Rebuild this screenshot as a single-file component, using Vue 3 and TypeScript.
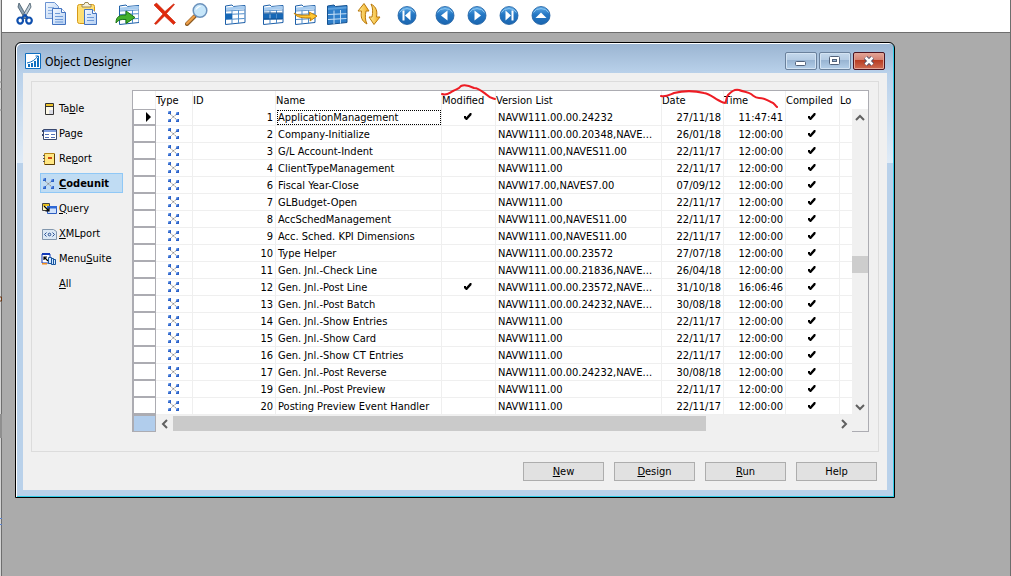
<script setup lang="ts">
import { ref } from 'vue'

interface Row {
  id: number
  name: string
  modified: boolean
  version: string
  date: string
  time: string
}

const toolGroups: { icon: string; label: string }[][] = [
  [
    { icon: 'cut', label: 'Cut' },
    { icon: 'copy', label: 'Copy' },
    { icon: 'paste', label: 'Paste' },
  ],
  [{ icon: 'insert', label: 'Insert' }],
  [
    { icon: 'delete', label: 'Delete' },
    { icon: 'find', label: 'Find' },
  ],
  [{ icon: 'field', label: 'Field filter' }],
  [
    { icon: 'table', label: 'Table filter' },
    { icon: 'flow', label: 'Flow filter' },
    { icon: 'all', label: 'Show all' },
    { icon: 'sort', label: 'Sort' },
  ],
  [{ icon: 'first', label: 'First' }],
  [
    { icon: 'prev', label: 'Previous' },
    { icon: 'next', label: 'Next' },
    { icon: 'last', label: 'Last' },
    { icon: 'up', label: 'List' },
  ],
]

const types = [
  { icon: 't-table', pre: 'Ta', key: 'b', post: 'le' },
  { icon: 't-page', pre: 'Pa', key: 'g', post: 'e' },
  { icon: 't-report', pre: 'Re', key: 'p', post: 'ort' },
  { icon: 't-code', pre: '', key: 'C', post: 'odeunit' },
  { icon: 't-query', pre: '', key: 'Q', post: 'uery' },
  { icon: 't-xml', pre: '', key: 'X', post: 'MLport' },
  { icon: 't-menu', pre: 'Menu', key: 'S', post: 'uite' },
  { icon: '', pre: '', key: 'A', post: 'll' },
]
const selected = ref('t-code')

const r = (id: number, name: string, version: string, date: string, time = '12:00:00', modified = false): Row => ({
  id, name, modified, version, date, time,
})

const rows: Row[] = [
  r(1, 'ApplicationManagement', 'NAVW111.00.00.24232', '27/11/18', '11:47:41', true),
  r(2, 'Company-Initialize', 'NAVW111.00.00.20348,NAVE...', '26/01/18'),
  r(3, 'G/L Account-Indent', 'NAVW111.00,NAVES11.00', '22/11/17'),
  r(4, 'ClientTypeManagement', 'NAVW111.00', '22/11/17'),
  r(6, 'Fiscal Year-Close', 'NAVW17.00,NAVES7.00', '07/09/12'),
  r(7, 'GLBudget-Open', 'NAVW111.00', '22/11/17'),
  r(8, 'AccSchedManagement', 'NAVW111.00,NAVES11.00', '22/11/17'),
  r(9, 'Acc. Sched. KPI Dimensions', 'NAVW111.00,NAVES11.00', '22/11/17'),
  r(10, 'Type Helper', 'NAVW111.00.00.23572', '27/07/18'),
  r(11, 'Gen. Jnl.-Check Line', 'NAVW111.00.00.21836,NAVE...', '26/04/18'),
  r(12, 'Gen. Jnl.-Post Line', 'NAVW111.00.00.23572,NAVE...', '31/10/18', '16:06:46', true),
  r(13, 'Gen. Jnl.-Post Batch', 'NAVW111.00.00.24232,NAVE...', '30/08/18'),
  r(14, 'Gen. Jnl.-Show Entries', 'NAVW111.00', '22/11/17'),
  r(15, 'Gen. Jnl.-Show Card', 'NAVW111.00', '22/11/17'),
  r(16, 'Gen. Jnl.-Show CT Entries', 'NAVW111.00', '22/11/17'),
  r(17, 'Gen. Jnl.-Post Reverse', 'NAVW111.00.00.24232,NAVE...', '30/08/18'),
  r(19, 'Gen. Jnl.-Post Preview', 'NAVW111.00', '22/11/17'),
  r(20, 'Posting Preview Event Handler', 'NAVW111.00', '22/11/17'),
]

const actions = [
  { key: 'N', rest: 'ew' },
  { key: 'D', rest: 'esign' },
  { key: 'R', rest: 'un' },
  { key: '', rest: 'Help' },
]
</script>

<template>
  <svg class="defs" aria-hidden="true">
    <defs>
      <linearGradient id="ball" x1="0" y1="0" x2="0" y2="1">
        <stop offset="0" stop-color="#62aee8" />
        <stop offset=".45" stop-color="#2477c4" />
        <stop offset="1" stop-color="#1b66b0" />
      </linearGradient>
      <linearGradient id="gold" x1="0" y1="0" x2="1" y2="0">
        <stop offset="0" stop-color="#fff0a0" />
        <stop offset="1" stop-color="#f0a818" />
      </linearGradient>
      <linearGradient id="paper" x1="0" y1="0" x2="1" y2="1">
        <stop offset="0" stop-color="#f4f9ff" />
        <stop offset="1" stop-color="#b4cff2" />
      </linearGradient>
    </defs>

    <symbol id="cut" viewBox="0 0 24 24">
      <path d="M6 1 5 5l7 12 2-2z" fill="#8fa3b3" stroke="#3f5566" stroke-width=".8" />
      <path d="M17 1l1 4-7 12-2-2z" fill="#c3d0da" stroke="#3f5566" stroke-width=".8" />
      <ellipse cx="7.2" cy="18.6" rx="2.8" ry="3.1" fill="none" stroke="#0e4fae" stroke-width="2.2" />
      <ellipse cx="16" cy="18.6" rx="2.8" ry="3.1" fill="none" stroke="#0e4fae" stroke-width="2.2" />
      <path d="M9 16l3-3 3 3" fill="none" stroke="#0e4fae" stroke-width="2" />
    </symbol>
    <symbol id="copy" viewBox="0 0 24 24">
      <path d="M.5.5h9l4 4v12H.5z" fill="url(#paper)" stroke="#6b93d2" />
      <path d="M3 5.500h6M3 8.500h7M3 11.500h7" stroke="#8dafde" />
      <path d="M7.500 6.500h9l4 4v12h-13z" fill="url(#paper)" stroke="#4373c0" />
      <path d="M16.500 6.500v4h4" fill="#fff" stroke="#4373c0" />
      <path d="M10 11.500h5M10 14.500h8M10 17.500h8M10 20h8" stroke="#6e9ad8" />
    </symbol>
    <symbol id="paste" viewBox="0 0 24 24">
      <rect x=".5" y="2.500" width="17" height="19" rx="2" fill="#ffdf72" stroke="#d69a17" />
      <path d="M5 5V2.500h2L8 .5h3l1 2h2V5z" fill="#f7f2dc" stroke="#9a8756" />
      <path d="M7.500 7.500h8l4 4v11h-12z" fill="url(#paper)" stroke="#4373c0" />
      <path d="M15.500 7.500v4h4" fill="#fff" stroke="#4373c0" />
      <path d="M10 12.500h4M10 15.500h7M10 18.500h7" stroke="#6e9ad8" />
    </symbol>
    <symbol id="sheet" viewBox="0 0 24 24">
      <path d="M2.500 5V4L9 3l1.500 1.500 11.500-1v17L2.500 22.500z" fill="#fff" stroke="#1d5fa8" />
      <path d="M3 7 21.500 5.500" stroke="#a9cdf0" stroke-width="3" />
      <path d="M3 9l18.500-1" stroke="#3c7fc4" stroke-width=".8" />
      <path d="M3 12.500l18.500-.8M3 17.500l18.500-1M9 8.500V22M15.500 8v13.500" stroke="#4f8dcb" />
    </symbol>
    <symbol id="insert" viewBox="0 0 24 24">
      <use href="#sheet" x="2" y="0" />
      <path d="M1 21C1 14 5 13 11 13V9l9 6.500-9 6V17.500C6 17 3 18 1 21z" fill="#43b02c" stroke="#1d7414" />
    </symbol>
    <symbol id="delete" viewBox="0 0 24 24">
      <path d="M1 3 3.500 1 12 9.500 20.500 2l1 .5-8 9 9 9-2 2-9-8.500L3 22.500l-1.500-1L10 12z" fill="#e02a0c" stroke="#c81e05" stroke-width=".6" />
    </symbol>
    <symbol id="find" viewBox="0 0 24 24">
      <path d="M10 14 2 22" stroke="#8b5a22" stroke-width="4" stroke-linecap="round" />
      <path d="M9 14.500 2 21.500" stroke="#f0a04a" stroke-width="2.400" stroke-linecap="round" />
      <circle cx="15" cy="8.500" r="6.800" fill="#c6e6fa" stroke="#6c93bd" stroke-width="1.500" />
      <path d="M10.500 8.500a5 5 0 0 1 6-4.500c-2 1-4 2-6 4.500z" fill="#fff" />
    </symbol>
    <symbol id="field" viewBox="0 0 24 24">
      <use href="#sheet" />
      <path d="M2 11.500h7v5.500H2z" fill="#1768b6" />
    </symbol>
    <symbol id="table" viewBox="0 0 24 24">
      <use href="#sheet" />
      <path d="M3 11.500h5.500V17H3zM9.500 11.500H15V17H9.500zM16 11.500h6V17h-6z" fill="#1768b6" />
      <path d="M3 11h18.500M3 17h18.500" stroke="#0f4c8e" />
    </symbol>
    <symbol id="flow" viewBox="0 0 24 24">
      <use href="#sheet" />
      <path d="M1 11c4 3 9 2 16 2l-1-3 8 4-7 5 1-3c-8 0-14 0-17-5z" fill="#ffc832" stroke="#c48008" />
    </symbol>
    <symbol id="all" viewBox="0 0 24 24">
      <path d="M2.500 5V4L9 3l1.500 1.500 11.500-1v17L2.500 22.500z" fill="#2f7fca" stroke="#15518f" />
      <path d="M3 7 21.500 5.500" stroke="#5b9fdc" stroke-width="2" />
      <path d="M3 12.500l18.500-.8M3 17.500l18.500-1M9 8.500V22M15.500 8v13.500" stroke="#c6e0f7" />
    </symbol>
    <symbol id="sort" viewBox="0 0 24 24">
      <path d="M7 1.500 1 9h3.500c-1 6 0 10 5.500 13-2-4-2-8-1-13H12z" fill="url(#gold)" stroke="#b8780c" />
      <path d="M17 22.500 23 15h-3.500c1-6 0-10-5.500-13 2 4 2 8 1 13H12z" fill="url(#gold)" stroke="#b8780c" />
    </symbol>
    <symbol id="disc" viewBox="0 0 24 24">
      <circle cx="12" cy="13.500" r="9" fill="url(#ball)" stroke="#1a5c9f" stroke-width=".8" />
      <path d="M4.500 10.500a8 6 0 0 1 15 0" fill="none" stroke="#8cc6f2" stroke-width="1" />
    </symbol>
    <symbol id="first" viewBox="0 0 24 24">
      <use href="#disc" />
      <path d="M7.500 8.500h2v10h-2zM15.500 8.500v10l-5.500-5z" fill="#fff" />
    </symbol>
    <symbol id="prev" viewBox="0 0 24 24">
      <use href="#disc" />
      <path d="M14.500 8.500v10L8 13.500z" fill="#fff" />
    </symbol>
    <symbol id="next" viewBox="0 0 24 24">
      <use href="#disc" />
      <path d="M9.500 8.500v10l6.500-5z" fill="#fff" />
    </symbol>
    <symbol id="last" viewBox="0 0 24 24">
      <use href="#disc" />
      <path d="M14.500 8.500h2v10h-2zM8.500 8.500v10l5.500-5z" fill="#fff" />
    </symbol>
    <symbol id="up" viewBox="0 0 24 24">
      <use href="#disc" />
      <path d="M6.500 16h11L12 10.500z" fill="#fff" />
    </symbol>

    <symbol id="t-code" viewBox="0 0 16 14">
      <path d="M4 4l7 6M4 10l3-3 4-3" stroke="#8a8a8a" stroke-dasharray="1.500 .6" fill="none" />
      <path d="M2 1h3v3H2zM2 9h3v3H2zM10 2h3v3h-3zM10 9h3v3h-3z" fill="#2c62c8" />
      <path d="M2 1h1.500v1.500H2zM2 9h1.500v1.500H2zM10 2h1.500v1.500H10zM10 9h1.500v1.500H10z" fill="#8db6f4" />
    </symbol>
    <symbol id="t-table" viewBox="0 0 16 14">
      <path d="M4.500 1.500h8v11h-8z" fill="#fdf9e8" stroke="#333" />
      <path d="M5 2h7v2H5z" fill="#ecc22c" />
      <path d="M4 4.500h9" stroke="#333" />
      <path d="M8 8h4v4H8z" fill="#d9dbe4" />
    </symbol>
    <symbol id="t-page" viewBox="0 0 16 14">
      <path d="M2.500 2.500h13v10h-13z" fill="#fff" stroke="#39486e" />
      <path d="M3 3h12v2H3z" fill="#7f9ee0" />
      <path d="M4 7.500h4M10 7.500h4M4 10.500h4M10 10.500h4" stroke="#5371b8" />
      <path d="M1.500 3v2M1.500 7v2" stroke="#39486e" />
    </symbol>
    <symbol id="t-report" viewBox="0 0 16 14">
      <path d="M3.500 1.500h10v11h-10z" fill="#ffe783" stroke="#b48417" />
      <path d="M13.500 2v10.500H4" fill="none" stroke="#5a3d08" />
      <path d="M2 3.500h2M2 6.500h2M2 9.500h2" stroke="#555" />
      <path d="M7 5h4v2H7z" fill="#cf4a12" />
    </symbol>
    <symbol id="t-query" viewBox="0 0 16 14">
      <path d="M1.500 1.500h7v7h-7z" fill="#fff6b8" stroke="#444" />
      <path d="M2 2h6v2H2z" fill="#e9c11c" />
      <path d="M6.500 4.500h9v7h-9z" fill="#cfe1fb" stroke="#2c5cc0" />
      <path d="M6 4h10v2.500H6z" fill="#2f68d6" />
      <path d="M3 4l5 5M8 5.500V9H4.500" stroke="#000" stroke-width="1.200" fill="none" />
    </symbol>
    <symbol id="t-xml" viewBox="0 0 16 14">
      <path d="M1.500 2.500h11l3 2v8h-14z" fill="#dbe8f4" stroke="#8297ad" />
      <path d="M5.500 5.500 3.500 7.500l2 2M11.500 5.500l2 2-2 2" stroke="#274f94" fill="none" />
      <circle cx="8.500" cy="7.500" r="1.300" fill="none" stroke="#274f94" />
    </symbol>
    <symbol id="t-menu" viewBox="0 0 16 14">
      <path d="M1 2h8v9H1z" fill="#fff" stroke="#1339b8" />
      <path d="M1 1h8v2H1z" fill="#1339b8" />
      <path d="M1 11h5v1.500H1z" fill="#ee8b1c" />
      <path d="M3 5l4 4M3 8V5h3" stroke="#000" stroke-width="1.200" fill="none" />
      <path d="M7.500 5.500h3v6h-3zM10.500 6.500h2v6h-2zM12.500 7.500h2v5h-2z" fill="#cfe5ff" stroke="#17559e" />
    </symbol>
    <symbol id="check" viewBox="0 0 10 8">
      <path d="M1 3h2v1.500L7 0h1.500v2L4 7H3L1 5z" fill="#000" />
    </symbol>
  </svg>

  <div class="desktop">
    <div class="edge">
      <svg class="remnants" viewBox="0 0 2 576" aria-hidden="true">
        <path d="M0 70h2M0 82h2M0 89h2M0 110h2" stroke="#888" />
        <path d="M0 297h1.500v4H0" stroke="#6b3410" fill="none" />
        <path d="M0 414h2v24H0z" fill="#8f8f8f" />
        <path d="M0 518.500h2M0 524.500h2" stroke="#5b83cf" />
      </svg>
    </div>
    <div class="main">
      <nav class="toolbar" aria-label="Toolbar">
        <div v-for="(group, i) in toolGroups" :key="i" class="tool-group">
          <button v-for="tool in group" :key="tool.icon" type="button" class="tool" :aria-label="tool.label">
            <svg width="24" height="24"><use :href="'#' + tool.icon" /></svg>
          </button>
        </div>
      </nav>

      <section class="window">
        <header class="titlebar">
          <svg class="logo" width="16" height="16" viewBox="0 0 16 16">
            <path d="M.5.5h15v15H.5z" fill="#fff" stroke="#0f6fc0" />
            <path d="M3 11h2v3H3zM6 10h2v4H6zM9 8h2v6H9zM12 5h2v9h-2z" fill="#0f6fc0" />
            <path d="M2 10c5-1 8-3 11-7M10.500 3H13.500v3" fill="none" stroke="#0f6fc0" />
          </svg>
          <h1>Object Designer</h1>
          <button type="button" class="caption" aria-label="Minimize">
            <svg width="12" height="12"><rect x=".5" y="6.500" width="10" height="4" rx="1" fill="#fff" stroke="#50617a" /></svg>
          </button>
          <button type="button" class="caption" aria-label="Maximize">
            <svg width="12" height="12">
              <rect x=".5" y="1.500" width="10" height="8" rx="1" fill="#fff" stroke="#50617a" />
              <rect x="3.500" y="4.500" width="4" height="2" fill="#9ab6d4" stroke="#50617a" />
            </svg>
          </button>
          <button type="button" class="caption close" aria-label="Close">
            <svg width="12" height="12">
              <path d="M2.500 2.500l7 7M9.500 2.500l-7 7" stroke="#50506a" stroke-width="4.500" />
              <path d="M2.500 2.500l7 7M9.500 2.500l-7 7" stroke="#fff" stroke-width="2.500" />
            </svg>
          </button>
        </header>

        <div class="client">
          <div class="panel">
            <div class="types">
              <button
                v-for="t in types"
                :key="t.post"
                type="button"
                class="type"
                :class="{ active: t.icon === selected }"
                @click="selected = t.icon"
              >
                <svg v-if="t.icon" width="16" height="14"><use :href="'#' + t.icon" /></svg>
                <span v-else class="no-icon"></span>
                <span>{{ t.pre }}<u>{{ t.key }}</u>{{ t.post }}</span>
              </button>
            </div>

            <div class="grid">
              <table>
                <colgroup>
                  <col class="c-sel" /><col class="c-type" /><col class="c-id" /><col /><col class="c-flag" />
                  <col /><col class="c-when" /><col class="c-when" /><col class="c-flag" /><col class="c-lo" />
                </colgroup>
                <thead>
                  <tr>
                    <th></th>
                    <th>Type</th>
                    <th>ID</th>
                    <th>Name</th>
                    <th class="marked">
                      Modified
                      <svg class="mark" width="60" height="24" viewBox="0 0 60 24">
                        <path d="M2 12c5 2 7-1 11-3s6-2 8-5c4-2 9 0 13 2 5 0 9 4 13 7 3 3 5 3 8 4" />
                      </svg>
                    </th>
                    <th>Version List</th>
                    <th class="marked">
                      Date
                      <svg class="mark" width="130" height="30" viewBox="0 0 130 30">
                        <path d="M1 14c5 1 8-1 13-3 8-2 18-3 30 0 6 1 10 5 14 7s4 3 7 3c2-2 1-6 3-8 3-3 6-6 11-5 5 2 9 2 12 4 4 3 4 4 8 4 6 0 7 2 12 4 4 1 4 4 6 5" />
                      </svg>
                    </th>
                    <th>Time</th>
                    <th>Compiled</th>
                    <th>Lo</th>
                  </tr>
                </thead>
                <tbody>
                  <tr v-for="(row, i) in rows" :key="row.id">
                    <td class="sel">
                      <svg v-if="i === 0" width="6" height="10"><path d="M0 0l5 5-5 5z" /></svg>
                    </td>
                    <td class="center"><svg width="16" height="14"><use href="#t-code" /></svg></td>
                    <td class="num">{{ row.id }}</td>
                    <td class="name" :class="{ focus: i === 0 }">{{ row.name }}</td>
                    <td class="center"><svg v-if="row.modified" width="10" height="8"><use href="#check" /></svg></td>
                    <td class="version">{{ row.version }}</td>
                    <td class="num">{{ row.date }}</td>
                    <td class="num">{{ row.time }}</td>
                    <td class="center"><svg width="10" height="8"><use href="#check" /></svg></td>
                    <td class="lo"></td>
                  </tr>
                </tbody>
              </table>
              <div class="vscroll">
                <button type="button" aria-label="Scroll up">
                  <svg width="10" height="8"><path d="M1 6l4-4 4 4" /></svg>
                </button>
                <div class="vtrack"><div class="vthumb"></div></div>
                <button type="button" aria-label="Scroll down">
                  <svg width="10" height="8"><path d="M1 2l4 4 4-4" /></svg>
                </button>
              </div>
              <div class="hscroll">
                <div class="corner"></div>
                <button type="button" aria-label="Scroll left">
                  <svg width="8" height="10"><path d="M6 1L2 5l4 4" /></svg>
                </button>
                <div class="htrack"><div class="hthumb"></div></div>
                <button type="button" aria-label="Scroll right">
                  <svg width="8" height="10"><path d="M2 1l4 4-4 4" /></svg>
                </button>
              </div>
              <div class="foot"></div>
            </div>
          </div>

          <footer class="actions">
            <button v-for="a in actions" :key="a.rest" type="button"><u>{{ a.key }}</u>{{ a.rest }}</button>
          </footer>
        </div>
      </section>
    </div>
  </div>
</template>

<style>
body {
  margin: 0;
  background: #ababab;
}
</style>

<style scoped>
.defs {
  position: absolute;
  width: 0;
  height: 0;
}
.desktop {
  display: flex;
  min-height: 100vh;
  font: 11px/16px Tahoma, 'DejaVu Sans Condensed', 'DejaVu Sans', sans-serif;
  color: #000;
}
button {
  margin: 0;
  padding: 0;
  border: 0;
  background: none;
  font: inherit;
  color: inherit;
}
svg {
  display: block;
  flex: none;
}
.edge {
  position: relative;
  width: 1px;
  flex: none;
  background: #d4d4d4;
  border-right: 1px solid #6e6e6e;
}
.remnants {
  position: absolute;
  left: 0;
  top: 0;
  width: 2px;
  height: 576px;
}
.main {
  flex: 1;
  min-width: 0;
  border-right: 1px solid #6e6e6e;
}
.toolbar {
  display: flex;
  gap: 14px;
  padding: 2px 11px 6px;
  background: #fff;
  border-bottom: 1px solid #6e6e6e;
}
.tool-group {
  display: flex;
  gap: 8px;
}
.window {
  margin: 9px 115px 0 13px;
  padding: 0 6px 6px;
  border: 1px solid #000;
  border-radius: 6px 6px 0 0;
  background: linear-gradient(#9ab4d1 0, #b9d1ea 30px, #dfebf7 120px, #b9d1ea 120px);
  box-shadow: inset 1px 1px #fff, inset -1px -1px #2fcbe6;
}
.titlebar {
  display: flex;
  align-items: center;
  gap: 2px;
  height: 30px;
  padding: 0 3px;
}
.titlebar h1 {
  flex: 1;
  margin: 0 0 0 2px;
  padding-top: 8px;
  font-size: 12px;
  font-weight: normal;
}
.logo {
  margin-top: 6px;
}
.caption {
  display: flex;
  align-items: center;
  justify-content: center;
  width: 32px;
  height: 18px;
  margin-top: 6px;
  border: 1px solid #6a819c;
  border-radius: 2px;
  background: linear-gradient(#c4d8ec 0, #b4cbe3 45%, #98b4d2 46%, #b4cfe9);
  box-shadow: inset 0 0 0 1px #d3e3f3;
}
.close {
  border-color: #4c1420;
  background: linear-gradient(#e3a598 0, #d38171 45%, #b83c22 46%, #cf6c54);
  box-shadow: inset 0 0 0 1px #e2a597;
}
.client {
  margin: 0 1px 1px;
  padding: 8px 8px 9px;
  background: #f0f0f0;
}
.panel {
  display: flex;
  gap: 9px;
  padding: 8px 9px 19px 8px;
  border: 1px solid #dcdcdc;
}
.types {
  display: flex;
  flex-direction: column;
  gap: 5px;
  width: 83px;
  flex: none;
  padding-top: 8px;
}
.type {
  display: flex;
  align-items: center;
  gap: 2px;
  height: 20px;
  padding-top: 1px;
  border: 1px solid transparent;
  text-align: left;
}
.type.active {
  border-color: #90c8f6;
  background: #c0dcf3;
  font-weight: bold;
}
.no-icon {
  width: 16px;
}
.grid {
  display: grid;
  grid-template-columns: 1fr 16px;
  flex: 1;
  min-width: 0;
  border: 1px solid #acacb2;
  border-bottom: 0;
  background: #fff;
}
table {
  width: 100%;
  table-layout: fixed;
  border-collapse: separate;
  border-spacing: 0;
}
.c-sel { width: 23px; }
.c-type { width: 37px; }
.c-id { width: 83px; }
.c-flag { width: 54px; }
.c-when { width: 62px; }
.c-lo { width: 12px; }
th,
td {
  box-sizing: border-box;
  padding: 0;
  border-right: 1px solid #efefef;
  white-space: nowrap;
  overflow: hidden;
}
th:last-child,
td.lo {
  border-right: 0;
}
th {
  height: 18px;
  padding-top: 2px;
  font-weight: normal;
  text-align: left;
  line-height: 16px;
}
td {
  height: 17px;
  padding-top: 2px;
  border-bottom: 1px solid #efefef;
  line-height: 14px;
}
th.marked {
  position: relative;
  overflow: visible;
}
.mark {
  position: absolute;
  left: -2px;
  top: -9px;
  z-index: 1;
  fill: none;
  stroke: #ee1c24;
  stroke-width: 2;
  stroke-linecap: round;
  pointer-events: none;
}
.sel {
  padding-top: 1px;
  border: solid #acacb2;
  border-width: 0 1px 2px;
}
tbody tr:first-child .sel {
  box-shadow: inset 0 1px #acacb2;
}
.sel svg {
  margin-left: 12px;
}
.center {
  padding: 0 1px 0 0;
}
.center svg {
  margin: 0 auto;
}
.num {
  padding-right: 2px;
  text-align: right;
}
.name,
.version {
  padding-left: 2px;
}
.focus {
  outline: 1px dotted #000;
  outline-offset: -2px;
}
.vscroll {
  display: flex;
  flex-direction: column;
  margin-top: 18px;
  background: #f0f0f0;
}
.vscroll button {
  display: flex;
  align-items: center;
  justify-content: center;
  height: 17px;
}
.vtrack {
  display: flex;
  flex-direction: column;
  flex: 1;
}
.vtrack::before {
  content: '';
  flex: 130;
}
.vtrack::after {
  content: '';
  flex: 125;
}
.vthumb {
  height: 17px;
  background: #cdcdcd;
}
.vscroll path,
.hscroll path {
  fill: none;
  stroke: #606060;
  stroke-width: 2;
}
.hscroll {
  display: flex;
  height: 17px;
  background: #f0f0f0;
}
.corner {
  width: 21px;
  border: 1px solid #acacb2;
  background: #b1cdec;
}
.hscroll button {
  display: flex;
  align-items: center;
  justify-content: center;
  width: 17px;
}
.htrack {
  flex: 1;
  padding: 1px 0;
}
.hthumb {
  width: 80.500%;
  height: 15px;
  background: #cacaca;
}
.foot {
  background: #f0f0f0;
  border-bottom: 1px solid #acacb2;
}
.actions {
  display: flex;
  justify-content: flex-end;
  gap: 10px;
  padding: 10px 2px 0 0;
}
.actions button {
  width: 81px;
  height: 19px;
  border: 1px solid #adadad;
  background: #e1e1e1;
  line-height: 17px;
}
</style>
